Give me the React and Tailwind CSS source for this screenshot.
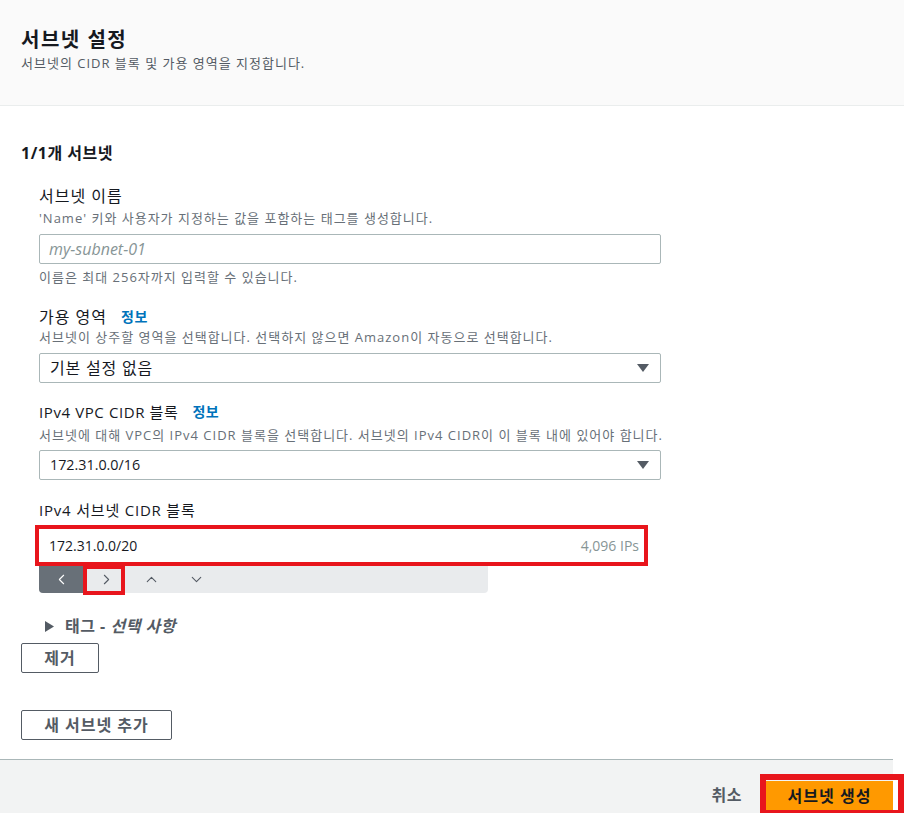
import { ChevronLeft, ChevronRight, ChevronUp, ChevronDown } from 'lucide-react';

const FONT = { fontFamily: '"Open Sans", "Noto Sans CJK KR", sans-serif' };

function Caret() {
  return (
    <svg width="12" height="8" viewBox="0 0 12 8" className="shrink-0">
      <path d="M0 0 H12 L6 8 Z" fill="#545b64" />
    </svg>
  );
}

function Label({ children, info, className = 'text-[16px] tracking-[1px]' }) {
  return (
    <div className="flex h-5 items-center leading-5 text-[#16191f]">
      <span className={className}>{children}</span>
      {info && <span className="ml-[14px] text-[14px] font-bold tracking-[0.5px] text-[#0073bb]">정보</span>}
    </div>
  );
}

function Desc({ children, className = '' }) {
  return <div className={`h-[18px] text-[13px] leading-[18px] tracking-[1px] text-[#687078] ${className}`}>{children}</div>;
}

function Select({ children, className = '' }) {
  return (
    <div
      className={`flex h-[30px] w-[622px] items-center justify-between rounded-[2px] border border-[#aab7b8] bg-white pl-[10px] pr-[11px] text-[#16191f] ${className}`}
    >
      {children}
      <Caret />
    </div>
  );
}

export default function App() {
  return (
    <div className="relative min-h-[813px] w-[904px] overflow-hidden bg-white" style={FONT}>
      <header className="h-[106px] border-b border-[#eaeded] bg-[#fafafa] pl-[21px] pt-[28px]">
        <h1 className="text-[20px] font-bold leading-6 tracking-[1.5px] text-[#16191f]">서브넷 설정</h1>
        <p className="mt-[2px] text-[13px] leading-[18px] tracking-[1px] text-[#545b64]">
          서브넷의 CIDR 블록 및 가용 영역을 지정합니다.
        </p>
      </header>

      <main className="pl-[21px] pt-[37px]">
        <h2 className="text-[16px] font-bold leading-5 tracking-[0.5px] text-[#16191f]">1/1개 서브넷</h2>

        <div className="pl-[18px]">
          <div className="mt-[23px]">
            <Label>서브넷 이름</Label>
            <Desc className="mt-[3px]">'Name' 키와 사용자가 지정하는 값을 포함하는 태그를 생성합니다.</Desc>
            <div className="mt-[7px] flex h-[30px] w-[622px] items-center rounded-[2px] border border-[#aab7b8] bg-white pl-[9px] text-[16px] italic text-[#879596]">
              my-subnet-01
            </div>
            <Desc className="mt-[4px]">이름은 최대 256자까지 입력할 수 있습니다.</Desc>
          </div>

          <div className="mt-[21px]">
            <Label info>가용 영역</Label>
            <Desc className="mt-[1px]">서브넷이 상주할 영역을 선택합니다. 선택하지 않으면 Amazon이 자동으로 선택합니다.</Desc>
            <Select className="mt-[7px]">
              <span className="text-[16px] tracking-[0.8px]">기본 설정 없음</span>
            </Select>
          </div>

          <div className="mt-[19px]">
            <Label info className="text-[15px] tracking-[0.6px]">IPv4 VPC CIDR 블록</Label>
            <Desc className="mt-[4px]">
              서브넷에 대해 VPC의 IPv4 CIDR 블록을 선택합니다. 서브넷의 IPv4 CIDR이 이 블록 내에 있어야 합니다.
            </Desc>
            <Select className="mt-[6px]">
              <span className="text-[14.3px]">172.31.0.0/16</span>
            </Select>
          </div>

          <div className="mt-[20px]">
            <Label className="text-[15px] tracking-[0.8px]">IPv4 서브넷 CIDR 블록</Label>
            <div className="-ml-[4px] mt-[5px] flex h-[41px] w-[613px] items-center justify-between border-4 border-[#e8151c] bg-white pl-[10px] pr-[5px]">
              <span className="text-[14px] text-[#16191f]">172.31.0.0/20</span>
              <span className="text-[14px] text-[#879596]">4,096 IPs</span>
            </div>
            <div className="flex h-[27px] w-[449px] rounded-b-[4px] bg-[#e9ebed]">
              <div className="flex w-[45px] items-center justify-center rounded-bl-[4px] bg-[#687078] text-white">
                <ChevronLeft size={17} strokeWidth={1.5} />
              </div>
              <div className="relative flex w-[45px] items-center justify-center text-[#545b64]">
                <ChevronRight size={17} strokeWidth={1.5} />
                <div className="pointer-events-none absolute -left-[1px] -top-[1px] h-[30px] w-[42px] border-4 border-[#e8151c]" />
              </div>
              <div className="flex w-[45px] items-center justify-center text-[#545b64]">
                <ChevronUp size={17} strokeWidth={1.5} />
              </div>
              <div className="flex w-[45px] items-center justify-center text-[#545b64]">
                <ChevronDown size={17} strokeWidth={1.5} />
              </div>
            </div>
          </div>

          <div className="mt-[23px] flex h-5 items-center pl-[6px] text-[16px] font-bold tracking-[0.5px] text-[#545b64]">
            <svg width="9" height="11" viewBox="0 0 9 11" className="mr-[11px]">
              <path d="M0 0 L9 5.5 L0 11 Z" fill="#545b64" />
            </svg>
            <span>태그 -&nbsp;</span>
            <span className="italic">선택 사항</span>
          </div>
        </div>

        <button className="mt-[7px] flex h-[30px] w-[78px] items-center justify-center rounded-[2px] border border-[#545b64] bg-white text-[16px] font-bold tracking-[1px] text-[#545b64]">
          제거
        </button>

        <button className="mt-[37px] flex h-[30px] w-[151px] items-center justify-center rounded-[2px] border border-[#545b64] bg-white text-[16px] font-bold tracking-[1px] text-[#545b64]">
          새 서브넷 추가
        </button>
      </main>

      <footer className="mt-[19px] flex h-[60px] w-[893px] items-start justify-end border-t border-[#aab7b8] bg-[#f2f3f3] pt-[21px]">
        <span className="mr-[24px] mt-[2px] text-[16px] font-bold tracking-[0.5px] text-[#545b64]">취소</span>
        <div className="relative">
          <button className="flex h-[29px] w-[127px] items-center justify-center bg-[#ff9900] text-[16px] font-bold tracking-[1px] text-[#16191f]">
            서브넷 생성
          </button>
          <div className="pointer-events-none absolute -bottom-[6px] -left-[6px] -right-[11px] -top-[7px] border-[6px] border-[#e8151c]" />
        </div>
      </footer>
    </div>
  );
}
